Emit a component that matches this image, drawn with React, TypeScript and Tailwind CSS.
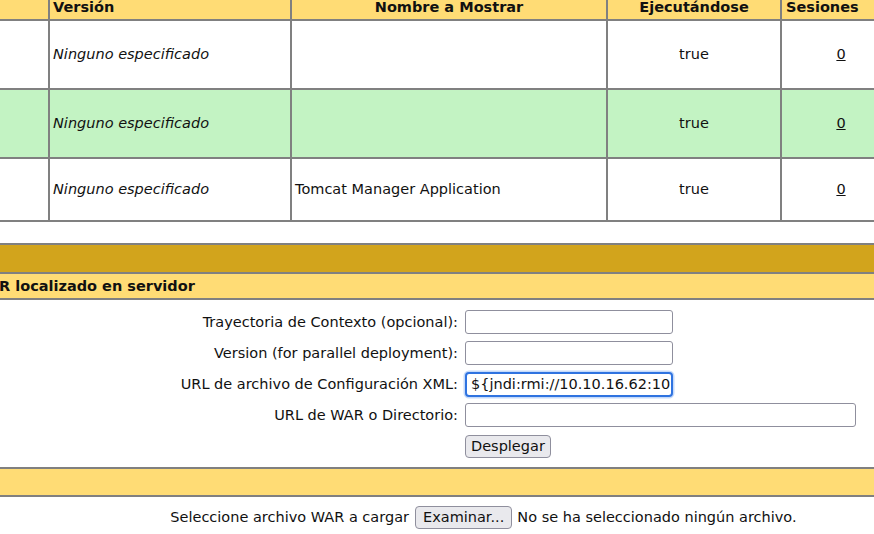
const cols = "grid grid-cols-[50px_242px_316px_174px_120px] w-[902px]";
const cell = "border-r-2 border-b-2 border-[#808080] flex items-center";

type AppRow = {
  version: string;
  display: string;
  running: string;
  sessions: string;
  green?: boolean;
  height: string;
};

const rows: AppRow[] = [
  { version: "Ninguno especificado", display: "", running: "true", sessions: "0", height: "h-[69px]" },
  { version: "Ninguno especificado", display: "", running: "true", sessions: "0", green: true, height: "h-[69px]" },
  { version: "Ninguno especificado", display: "Tomcat Manager Application", running: "true", sessions: "0", height: "h-[63px]" },
];

function FormRow({ label, children, className = "" }: { label: string; children: React.ReactNode; className?: string }) {
  return (
    <div className={`flex items-center h-[24px] ${className}`}>
      <div className="w-[458px] text-right whitespace-nowrap">{label}</div>
      <div className="ml-[7px] flex items-center">{children}</div>
    </div>
  );
}

export default function App() {
  return (
    <div className="w-[874px] h-[534px] overflow-hidden bg-white text-[#111] font-['DejaVu_Sans',sans-serif] text-[14.5px] leading-none">
      {/* Applications table (scrolled, header row partly out of view) */}
      <div className="-mt-[5px]">
        <div className={`${cols} h-[26px] bg-[#FFDC75] font-bold`}>
          <div className={cell} />
          <div className={`${cell} pl-[3px]`}>Versión</div>
          <div className={`${cell} justify-center`}>Nombre a Mostrar</div>
          <div className={`${cell} justify-center`}>Ejecutándose</div>
          <div className={`${cell} pl-[4px]`}>Sesiones</div>
        </div>
        {rows.map((r, i) => (
          <div key={i} className={`${cols} ${r.height} ${r.green ? "bg-[#C3F3C3]" : "bg-white"}`}>
            <div className={cell} />
            <div className={`${cell} pl-[3px] italic`}>{r.version}</div>
            <div className={`${cell} pl-[3px]`}>{r.display}</div>
            <div className={`${cell} justify-center`}>{r.running}</div>
            <div className={`${cell} justify-center`}>
              <span className="underline">{r.sessions}</span>
            </div>
          </div>
        ))}
      </div>

      <div className="h-[21px]" />

      {/* Deploy section */}
      <div className="border-t-2 border-[#808080]">
        <div className="h-[29px] bg-[#D2A41C] border-b-2 border-[#808080]" />
        <div className="h-[26px] bg-[#FFDC75] border-b-2 border-[#808080] flex items-center font-bold">
          <span className="-ml-[1px] whitespace-nowrap">R localizado en servidor</span>
        </div>
        <div className="h-[169px] pt-[10px] border-b-2 border-[#808080]">
          <FormRow label="Trayectoria de Contexto (opcional):">
            <input readOnly className="w-[208px] h-[24px] border border-[#8f8f9d] rounded-[3px] px-[4px] bg-white" />
          </FormRow>
          <FormRow label="Version (for parallel deployment):" className="mt-[7px]">
            <input readOnly className="w-[208px] h-[24px] border border-[#8f8f9d] rounded-[3px] px-[4px] bg-white" />
          </FormRow>
          <FormRow label="URL de archivo de Configuración XML:" className="mt-[7px]">
            <input
              readOnly
              value="${jndi:rmi://10.10.16.62:10"
              className="w-[208px] h-[25px] border-2 border-[#2f73e0] rounded-[4px] pl-[4px] pr-[1px] bg-white shadow-[0_0_0_1.5px_#c5dafa] outline-none"
            />
          </FormRow>
          <FormRow label="URL de WAR o Directorio:" className="mt-[7px]">
            <input readOnly className="w-[391px] h-[24px] border border-[#8f8f9d] rounded-[3px] px-[4px] bg-white" />
          </FormRow>
          <div className="flex h-[23px] mt-[8px]">
            <div className="w-[465px]" />
            <button type="button" className="h-[23px] px-[5px] bg-[#e9e9ed] border border-[#8f8f9d] rounded-[4px]">
              Desplegar
            </button>
          </div>
        </div>
        <div className="h-[28px] bg-[#FFDC75] border-b-2 border-[#808080]" />
        <div className="pt-[9px] flex items-center">
          <div className="w-[409px] text-right whitespace-nowrap">Seleccione archivo WAR a cargar</div>
          <button type="button" className="ml-[6px] h-[23px] px-[7px] bg-[#e9e9ed] border border-[#8f8f9d] rounded-[4px]">
            Examinar...
          </button>
          <span className="ml-[5px] whitespace-nowrap">No se ha seleccionado ningún archivo.</span>
        </div>
      </div>
    </div>
  );
}
